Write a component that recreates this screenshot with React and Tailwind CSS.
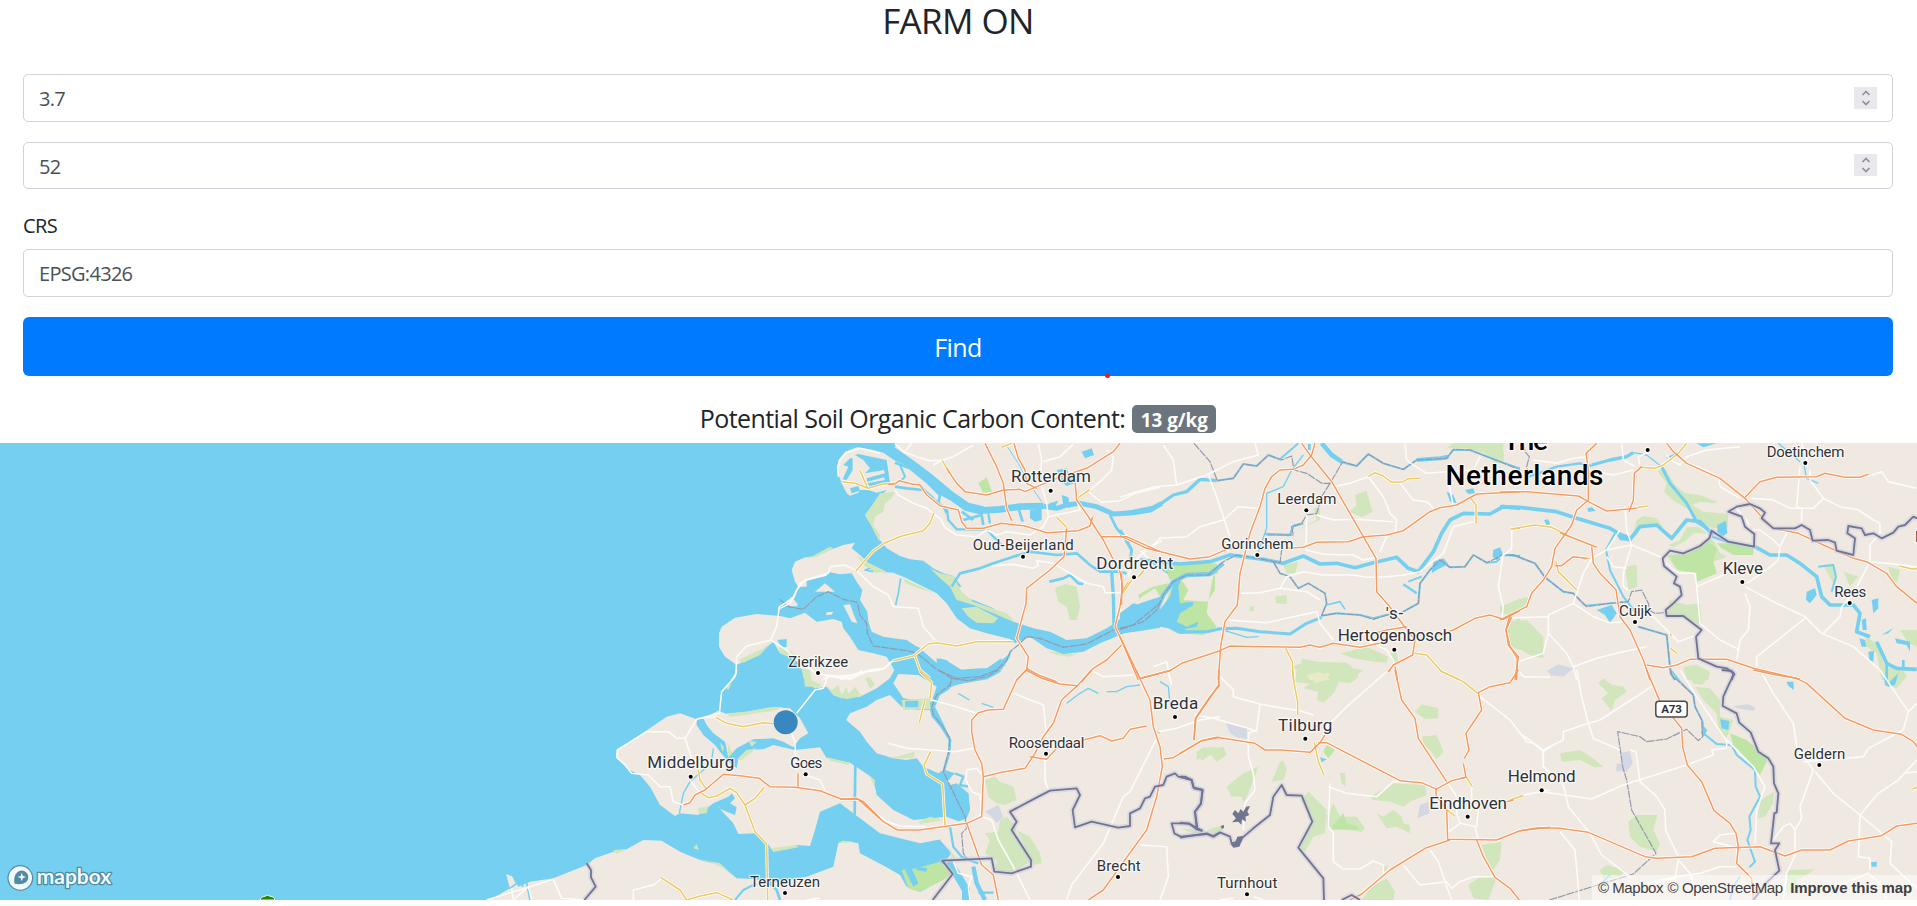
import React from "react";

// Each map tile holds shapes in its own 1/3-pixel grid, offset by (x, y) in page pixels.
const MAP_TOP = 443;
const tiles = [
  {
    x: 780, y: 440,
    land: [
      "355,0 338,32 385,55 430,88 480,125 530,165 560,185 520,185 480,165 440,125 400,85 345,62 310,38 270,28 230,22 195,35 175,60 172,95 185,130 200,160 210,167 235,158 240,150 265,150 290,158 320,150 300,170 280,195 255,225 275,255 300,300 320,325 360,348 390,358 430,362 460,385 490,400 520,408 545,440 515,440 540,470 580,480 640,505 720,560 705,600 690,650 664,690 610,715 560,725 515,740 480,765 465,800 490,850 513,900 505,950 495,990 525,1000 510,1015 530,1030 565,1060 570,1110 560,1135 510,1155 480,1200 515,1240 490,1270 400,1420 3500,1420 3500,0",
      "35,390 45,365 75,352 110,348 150,330 190,315 225,308 215,325 240,345 265,370 290,395 340,398 380,415 420,435 470,460 500,490 530,535 570,565 620,580 690,597 708,608 690,640 660,665 630,683 590,695 545,690 510,668 480,655 470,680 440,662 415,635 410,620 380,600 340,595 310,590 275,575 265,545 262,515 240,480 247,450 230,425 215,400 180,403 150,397 120,410 80,420 80,440 55,440 45,425",
      "105,455 135,430 165,455", "190,495 210,493 220,520 232,550 215,545",
      "140,517 160,515 155,524 138,525", "20,480 35,485 55,500 30,495",
    ],
    green: [
      "300,160 345,155 335,175 315,190 310,215 285,230 280,255 300,285 298,305 275,260 255,225 280,190",
      "825,445 855,432 890,440 900,500 890,540 870,540 860,500 835,485",
      "450,385 480,400 520,408 545,455 580,485 680,520 710,550 640,520 580,495 530,480 510,440 480,415",
      "545,505 590,500 655,535 640,550 590,548 565,530", "230,345 260,365 320,395 285,398 250,375",
      "370,415 400,430 460,458 430,450 375,430", "800,632 880,642 920,625 870,650 830,645",
    ],
    dark: ["595,130 620,112 636,155 610,158", "1075,465 1110,445 1140,440 1140,490 1100,480 1080,485", "1040,510 1075,490 1110,500 1100,530 1040,543"],
    water: [
      "700,545 760,565 810,575 860,600 920,595 980,565 1010,545 1045,515 1080,490 1140,470 1140,540 1080,560 1020,585 960,610 910,635 850,642 800,625 750,590 705,610 690,590",
      "190,75 210,55 218,55 218,90 200,120 188,118 205,80", "225,45 235,42 320,60 330,130 270,140 262,130 315,120 312,112 262,125 260,115 315,100 312,90 255,100 270,85 250,60",
      "210,145 235,138 240,152 215,160", "750,210 785,205 785,240 765,245 750,235", "845,165 865,172 870,205 850,195",
      "905,35 935,25 942,45 915,55", "470,655 500,660 530,690 600,685 640,685 600,720 540,718 470,690", "830,90 860,85 870,110 895,125 860,138 845,125",
      "808,190 835,182 820,210 800,208",
    ],
    rivers: [
      [26, "330,28 390,70 450,115 510,165 560,200 610,212"], [20, "600,212 660,208 720,200 790,198"], [15, "790,198 830,205 860,195 900,190 950,200 1000,222 1060,218 1110,210 1145,190"],
      [7, "500,200 505,240 530,268 620,268 640,290 670,320"], [6, "360,75 375,110 365,120"], [8, "345,68 390,85 440,125 480,165 475,190"],
      [7, "420,135 450,170 490,200 500,220"], [8, "345,140 380,145 430,150 460,175"], [8, "515,440 540,400 600,385 640,370 700,350 750,335 830,345 890,340 930,375 960,395 1010,395 1040,400"],
      [10, "995,395 1000,470 1002,560"], [8, "990,225 1010,265 1040,300 1055,330 1050,360"], [8, "550,240 605,225 610,255"], [8, "545,215 580,240"], [7, "625,220 630,250"], [8, "715,205 728,245"],
      [8, "808,425 850,415 870,405 895,430 910,432"], [3, "682,20 715,70 740,120 785,185"], [5, "362,415 355,460 347,495"], [5, "270,385 255,390 280,395"],
      [24, "230,500 265,590 300,612 410,632 470,685 540,720 620,700 670,665"],
    ],
    white: [
      "345,10 370,35 415,52 450,62 490,60 520,50 580,15", "375,35 395,10", "485,60 460,75", "175,110 173,80 180,60 200,38 240,25 300,40", "345,150 355,165 400,190 440,205 480,235 495,262 530,285 590,290 620,270 650,285 680,275 750,285 790,260 805,230 800,190 780,120 785,60 775,12",
      "790,65 840,50 880,12", "925,155 965,187 1020,182 1065,160 1140,142", "980,30 1000,50 995,90 960,125 930,150", "805,230 900,210 890,180", "635,378 700,373 760,385 775,375 770,362 820,370 870,400 920,430 970,440 975,458 1030,458",
      "0,505 30,490 50,450 75,420 145,400 150,380 195,375 230,392 280,440 325,465 340,500 415,505 430,560 465,600", "1145,302 1100,330 1060,365 1045,410", "145,710 220,705 270,690 310,685 340,660",
    ],
    yellow: ["185,125 225,130 265,145 305,133 345,130", "240,92 262,142", "462,218 450,250 430,272 365,288 315,308 280,333 228,392", "487,62 510,100", "665,22 695,10", "340,662 400,648 445,612 470,608 530,618 590,605 700,605", "405,648 420,690 450,715", "928,150 895,172", "830,232 860,262", "1088,395 1075,412", "1055,420 1030,458"],
    orange: [
      "325,133 345,132 358,122 395,132 420,135 440,165 480,197 535,210 545,245 560,265 610,265 665,250 735,258 800,278 895,272 930,258", "500,85 530,130 555,155 620,165 670,150 720,148 735,155 770,140 830,115 920,85 1000,35 1020,10",
      "615,10 650,80 670,130 680,205 695,242", "702,10 715,55 735,90 740,130 770,145", "885,125 890,180 925,230 950,270 970,300 990,340 1020,395 1028,440 1020,500 1005,560 1080,715", "965,290 1040,290 1140,335", "860,265 852,350 810,390 740,445 738,490 710,595 745,650 740,690 710,720", "740,685 775,705 830,725", "1025,615 980,660 940,685 905,725", "938,230 930,258",
    ],
    bound: ["0,478 25,500 70,508 110,470 145,455 190,478 232,487 240,525 260,550 262,580 280,618 380,632 412,640 470,688 530,715 600,710 650,690 680,662 690,635 715,615 740,590 780,595 850,622 920,612 1000,570 1060,555 1140,490"],
  },
  {
    x: 600, y: 440,
    land: ["357,580 365,560 405,533 470,522 540,528 570,535 615,518 650,545 700,537 725,545 730,565 750,590 775,630 820,640 860,650 883,690 870,715 830,745 780,770 725,775 700,765 680,740 645,745 620,730 610,700 590,660 540,640 520,605 490,630 450,655 410,675 375,650 357,620", "555,490 575,470 595,495 575,500"],
    green: ["415,660 490,625 515,605 480,645 430,668", "605,685 625,690 630,720 610,715", "535,620 575,635 590,655 540,640", "600,360 650,350 700,325 690,320 640,347", "615,740 610,700 625,690 635,740"],
    water: ["532,600 560,597 560,620 545,625"],
    rivers: [],
    white: ["395,722 408,700 410,650 440,618 512,600 530,560 538,500 580,475 600,430 620,420 680,405", "515,602 560,630 590,660 650,700 720,715 790,695 850,688 880,662", "670,720 685,705"],
    yellow: [], orange: [], bound: [],
  },
  {
    x: 1120, y: 440,
    land: [],
    green: ["705,165 740,152 750,190 758,215 725,232 690,215 710,195", "465,470 500,465 500,492 468,490", "390,500 403,497 400,515 388,512", "980,25 1000,10 1150,10 1150,55 1130,75 1095,40 1040,25", "515,680 545,670 545,655 590,665 680,668 700,685 730,690 690,720 530,720 540,695", "660,640 740,620 805,650 800,668 760,665 700,655", "810,640 830,635 835,665 820,672", "580,205 600,205 600,240 520,275 590,240", "490,375 535,365 525,400 500,400", "1145,500 1200,475 1200,520 1165,520", "1160,560 1200,530 1200,630 1170,620"],
    dark: ["130,375 290,370 295,400 260,410 200,402 150,420", "190,420 285,405 285,450 265,480 260,520 290,560 250,585 170,580 140,560 120,555 140,480 160,430", "55,465 100,440 145,430 120,490 110,480 65,490"],
    landOver: ["185,420 280,405 265,485 190,480 205,450", "50,490 65,470 105,445 120,470 110,490 70,505"],
    pale: ["560,705 600,695 630,720 570,720"],
    water: ["0,520 40,490 60,495 30,530 110,520 150,470 160,430 185,415 175,440 180,490 220,485 220,495 180,520 170,545 200,560 235,545 230,560 180,570 210,580 180,582 145,565 120,560 60,570 0,580", "980,155 1000,165 1010,190 990,185", "1035,150 1060,145 1065,160 1045,162", "1120,330 1140,322 1150,345 1130,360 1118,350", "940,365 970,355 985,372 950,390 935,400"],
    rivers: [
      [10, "0,222 50,212 110,200 160,165 200,155 240,118 290,122"], [6, "290,122 340,115 370,72 410,78 445,45 480,58 535,10"], [4, "550,45 515,90 490,140 440,160 440,265 415,335"],
      [7, "435,282 510,285 520,258 550,250"], [14, "605,10 635,45 665,65"], [6, "660,65 710,78 745,42 790,70 850,88 890,60 980,55 1000,30 1050,30 1140,65 1200,85"], [12, "890,60 960,55 985,50"],
      [11, "60,360 140,368 180,372 270,365 330,345 370,350 430,358 490,370 550,348 600,372 650,370 705,383 760,368 830,352 865,385 895,395 940,335 965,280 990,240 1030,220 1110,222 1150,200 1200,205"],
      [6, "0,578 60,570 120,560"], [13, "10,568 70,545 110,510 130,465 160,425 200,405 270,402 310,370"], [9, "150,560 200,575 260,575 300,566 350,565 420,575 510,582 560,550 605,532"], [4, "315,572 380,592 415,590"],
      [5, "460,365 480,400 510,410 535,445 565,430 615,460 620,490 605,525"], [5, "620,495 660,485 675,508"], [6, "605,527 650,520 720,525 760,535 800,525 840,520"], [6, "850,515 895,490 900,430 930,390 960,360 990,382 1035,380 1060,345 1100,368 1130,365 1150,345 1200,348"], [7, "850,433 890,460"], [6, "865,425 905,410"], [9, "0,270 35,330"], [5, "100,370 145,400"], [8, "568,12 568,30"],
    ],
    white: ["130,15 160,60 170,135 105,140 50,155 0,172", "170,135 260,105 340,65 415,45 405,10", "265,105 290,170 330,290", "410,205 355,200 310,240 240,260 200,290 120,295 105,310 65,335 85,355", "640,140 690,130 745,110 790,170 810,220 830,240 825,280 800,290 780,335", "590,225 640,240 700,238 820,245", "560,225 558,330 610,343 700,345 730,360 770,352", "855,10 860,60 880,75 920,100 980,95", "840,130 880,180 920,185 940,205", "480,445 500,410 550,395 610,405 700,405 740,412 800,410 850,405 900,395 970,340 1000,260 1060,245", "360,460 420,458 480,445 560,455 600,480", "325,540 440,548 520,530 590,515 600,550 640,600", "980,95 1000,200", "1150,340 1135,440 1150,500 1145,540", "750,605 800,630 820,660 830,720", "100,680 140,665 150,720", "990,150 980,95 1060,90 1080,50"],
    yellow: ["745,110 765,98 790,108 815,127 850,125 865,116 900,115", "1052,175 1068,195 1068,250", "1175,267 1200,265", "497,625 517,665 520,720", "883,640 920,645 965,695 1020,720", "5,458 25,425", "55,410 72,390"],
    orange: ["0,287 80,325 210,357 270,350 320,328 370,322", "545,10 570,45 635,125 730,290 768,355 770,455 805,495 850,555 870,580 885,600 878,645 820,675 805,695", "585,10 575,45 550,75 520,88 480,90 455,110 435,145 420,200 390,280 360,400 352,495 315,545 302,620 295,720", "60,715 150,692 185,670 300,632 330,618 430,620 540,622 570,615 600,622 640,610 720,622 800,605", "500,325 550,322 590,307 685,305 730,290 800,285 850,272 930,215 960,203 1010,195 1070,162 1200,155", "765,580 800,570 860,560", "930,590 1000,570 1065,535 1110,525 1150,538 1200,512", "1175,530 1158,570 1165,615 1195,650 1185,720", "825,680 832,720", "0,590 55,720", "5,400 5,495"],
    bound: ["222,10 270,65 292,122 340,115 370,72 410,78 445,45 485,60 515,48 522,90 560,100 605,130 630,130 668,65 710,78 745,42 790,70 850,88 890,60 980,55 1000,28 1050,30 1140,65 1200,90", "630,130 605,170 590,220 560,225 545,250 515,260 520,285 440,285", "0,568 70,545 110,510 130,465 160,425 200,405 265,405 310,365 350,345 430,358 480,368 485,330", "460,365 480,400 510,410 535,445 565,430 615,460 620,490 605,527 650,520 720,525 760,538 800,525 840,520 895,490 900,430 930,390 960,360 990,382 1035,380 1060,345 1100,368 1150,345 1200,348"],
  },
  {
    x: 1500, y: 440,
    land: [],
    green: ["472,92 495,85 525,135 555,160 600,165 655,187 640,190 600,185 575,195 610,215 685,222 683,262 640,265 600,250 570,210 520,182 492,155 500,130", "410,240 430,228 470,235 490,262 470,258 425,258 412,285 395,298", "505,315 540,300 560,262 595,260 620,280 580,280 560,300 520,322", "500,345 560,340 620,300 640,300 660,340 680,350 640,365 650,400 590,425 590,400 530,390", "510,480 560,495 600,490 605,555 545,530 500,525", "375,380 410,375 412,440 385,450", "20,545 80,540 130,590 130,655 90,645 55,625 30,580", "0,500 80,470 90,490 30,525 0,520", "550,680 590,675 630,695 625,720 560,720", "970,375 1000,370 1010,420 1000,430", "1030,395 1075,410 1050,440 1040,415", "1165,380 1200,390 1190,430 1175,420", "1095,590 1130,610 1155,680 1200,690 1190,720 1145,720 1130,640 1100,620", "1200,570 1251,570 1251,620 1225,610", "0,20 12,40 10,65 0,70"],
    dark: ["510,345 560,345 625,305 650,325 640,365 650,400 590,425 590,400 535,390 520,370", "650,310 690,310 760,320 760,345 700,345 665,325"],
    purple: ["145,690 175,673 220,685 190,710 155,705"],
    water: ["652,255 678,242 682,280 665,290 652,275", "262,205 275,202 287,212 265,216", "132,240 145,238 150,252 140,256", "290,510 335,495 350,520 330,548 315,525", "920,455 945,445 950,465 930,490 918,480", "1115,480 1135,475 1135,505 1120,520", "1085,540 1098,535 1100,570 1088,570", "1145,585 1180,563 1165,580", "1185,595 1230,605 1230,635 1220,615 1190,610", "1078,595 1095,600 1100,620 1085,620", "1105,635 1122,633 1120,665 1108,660", "340,270 395,290 395,305 360,300", "590,10 650,10 610,22"],
    rivers: [
      [11, "0,200 60,202 170,215 230,235 330,265 390,300"], [11, "390,298 420,260 470,255 515,295 560,240 600,245 640,285"], [10, "275,75 330,60 380,50 400,38"], [4, "400,38 440,45 485,80"], [9, "485,80 510,130 560,190 590,245 625,268"], [7, "85,110 130,95 170,80 240,70 275,78"],
      [7, "635,290 680,305 765,320"], [11, "765,320 810,345 860,345 900,370 950,410 965,470 990,495 1030,495 1060,495 1080,520 1070,575 1110,590"], [11, "1130,605 1160,670 1190,685 1250,688"], [6, "0,345 40,345 105,370 135,412 190,455 220,460 255,497"],
      [6, "345,280 318,330 330,390 370,470 410,520"], [5, "255,497 330,490 385,485"], [6, "415,560 500,585 512,700 525,720"], [4, "835,10 900,65"], [4, "912,75 920,115 955,130"], [5, "560,12 540,35 500,55"], [6, "955,380 1000,375 1008,410 995,455"], [8, "1160,670 1160,720"], [8, "1210,660 1210,690"],
    ],
    white: ["100,60 170,70 220,55 265,50", "265,90 340,105 400,90", "365,10 370,60 405,80", "450,35 415,50 420,85", "580,75 655,110 660,140 720,175", "500,45 510,60 540,75 560,50 620,30 720,20", "900,80 890,200 905,205 905,250", "755,175 820,180 870,205 940,205 970,175 1020,200 1075,210 1120,240 1140,250 1140,280 1110,315 1110,365 1060,460 1025,500 1020,530 970,580", "970,175 930,120 930,90", "1110,365 1160,370 1250,380", "700,195 740,240 750,270 780,270 820,300 840,320 835,360 800,390 740,430", "840,320 860,280", "320,330 395,315 480,350 520,390 540,400 585,400 590,440 670,405", "375,200 380,270 395,315 370,400 370,440 385,450", "320,330 275,355 250,400 220,490 145,525 145,580 130,640 55,665", "145,580 200,640 220,680 230,720", "0,535 145,530", "220,490 280,530 330,548 370,545", "590,440 600,550 660,600 720,630", "735,460 750,500 745,570 720,600 710,660", "735,440 830,490 915,530 965,580 1060,620 1140,690", "915,535 770,650 770,680", "420,490 470,540 535,605 590,585", "0,355 35,325 35,270", "320,350 340,380 380,385", "1100,110 1145,95 1165,125 1250,145", "220,680 290,655 350,640 440,620", "360,270 320,330", "905,10 925,70"],
    yellow: ["420,82 465,85 490,75 535,40 560,10", "32,267 105,255 155,262 200,285", "410,203 443,198", "168,365 175,395 230,450", "512,580 512,588", "512,625 530,640", "1198,378 1240,388 1251,385", "250,357 270,355"],
    orange: ["290,10 258,40 265,90 265,180 230,210 215,255 165,325 155,380 130,420 95,460 80,500 30,525 18,570 30,620 52,655 50,720", "0,156 80,155 235,168 265,185 320,213 410,205", "425,80 403,100 400,180 387,215", "500,10 520,35 560,70 660,115 735,175 780,225 820,265 895,280 970,315 1060,355 1100,365 1160,400 1190,440 1251,490", "735,172 780,125 830,112 950,110 975,100 1035,112 1080,112 1105,103", "180,278 290,322", "275,320 280,370 300,400 348,450 360,530 390,570 430,660 450,720", "165,377 185,377 220,350 260,355", "0,540 30,525", "440,675 490,683 530,675 570,658 680,658 760,685 900,718"],
    bound: ["0,345 40,345 105,370 135,412 190,455 220,460 260,500 330,490 385,485 395,455 425,450 445,490 450,512 465,520 495,518", "415,560 500,585 512,700 525,720", "70,10 75,35 88,50 80,80 85,95"],
    border: ["1251,235 1240,230 1215,255 1195,260 1180,278 1145,295 1120,280 1095,285 1085,265 1045,258 1042,280 1065,295 1060,345 1010,332 1005,308 985,300 938,302 930,270 905,255 885,265 820,265 785,235 795,218 780,205 750,192 710,200 685,215 725,230 735,260 763,282 762,320 685,305 635,272 628,295 600,318 550,340 510,332 488,355 492,378 530,410 522,430 540,440 545,465 520,490 497,510 500,528 550,528 605,570 588,590 595,655 650,680 680,685 700,700 695,720"],
  },
  {
    x: 480, y: 670,
    land: [
      "410,265 412,240 480,195 560,140 600,130 650,148 650,165 670,195 705,225 740,270 770,295 775,265 800,240 850,238 880,225 945,240 1020,232 1040,265 1110,278 1170,318 1185,350 1190,375 1240,420 1300,450 1400,440 1450,460 1450,520 1400,505 1320,520 1200,490 1120,430 1080,400 1020,425 1005,480 990,528 950,525 880,545 860,515 825,490 775,492 760,460 715,412 740,400 750,378 700,400 655,435 600,430 585,438 540,405 510,350 480,315 450,300",
      "670,145 715,122 740,132 800,125 880,112 930,115 960,145 985,190 960,205 940,232 910,215 880,205 820,208 770,235 745,262 735,215 700,190 680,165",
      "20,695 90,655 78,612 100,620 115,650 150,635 220,625 320,585 345,565 400,545 440,538 490,510 545,512 600,545 660,570 720,585 770,625 830,628 870,640 980,620 1060,590 1075,520 1090,512 1135,520 1140,550 1220,592 1260,615 1280,650 1320,665 1400,625 1450,700",
    ],
    green: ["740,130 800,125 870,112 910,112 880,122 800,134 750,140", "968,0 990,0 995,30 1025,45 1010,55 980,45", "1040,45 1055,60 1075,45 1085,75 1100,50 1105,72 1125,50 1140,72 1150,75 1085,85 1060,75", "742,215 755,245 765,240 745,262", "720,218 732,230 728,250", "770,270 800,240 830,235 785,270", "1040,262 1110,278 1105,285 1050,272", "1170,318 1185,330 1183,350", "655,415 685,408 680,430 655,432", "640,535 650,522 657,540", "870,535 950,525 955,532 885,545", "400,540 440,538 410,552", "640,563 720,580 770,625 740,600 690,575", "1075,518 1090,512 1120,515 1090,520", "805,212 830,215 815,230", "735,50 755,40 745,60"],
    water: ["738,390 755,370 765,385 750,400 770,412 765,435 740,425 715,415", "1122,280 1130,285 1128,435 1120,430"],
    rivers: [[4, "630,335 610,370 598,430"], [4, "700,235 695,270 670,300 630,335"], [6, "720,240 740,260"], [6, "765,690 790,660 830,640"], [8, "870,640 890,660 900,690"], [5, "95,610 110,640 90,655"], [5, "130,600 140,640 150,690"], [5, "110,630 130,650"]],
    white: ["770,0 765,20 725,65 718,130 650,148 615,205 590,205 565,185 500,185 412,240 410,262 435,285 455,310 505,315 540,350 570,350 580,395 610,405", "615,205 640,280", "710,140 660,145", "1045,15 1030,55 1005,60 950,130", "915,150 945,215 948,300", "630,330 660,370", "975,315 1020,330 1035,360", "1045,15 1110,28 1160,5 1200,0", "20,690 150,650 220,628 245,685 310,690", "460,690 460,660 520,645 545,625", "95,655 100,690 145,650 155,690", "980,690 1020,685"],
    yellow: ["708,142 740,160 790,170 850,158 890,162", "655,300 660,330 680,358", "665,370 685,383 710,378 750,355 770,368 795,405 825,485 860,522 863,690", "795,405 825,385 853,352", "543,623 600,660 620,690 660,678 710,668 760,690"],
    orange: ["610,405 630,398 645,375 675,360 730,313 780,317 838,325 870,350 945,352 1020,362 1085,388 1130,385 1150,395 1200,445", "954,310 954,350"],
    bound: [],
    border: ["320,580 333,600 333,622 347,650 313,690"],
  },
  {
    x: 840, y: 670,
    land: ["18,150 30,130 80,110 110,90 150,75 185,110 230,120 270,120 275,140 300,170 325,200 330,240 310,300 295,310 250,290 230,265 200,270 160,265 110,250 80,215 60,185", "160,40 175,12 235,15 290,50 275,95 230,90 190,85", "320,330 345,325 350,340 330,345"],
    green: ["185,90 270,85 272,118 190,120", "75,25 90,20 105,45 90,55", "0,80 45,60 55,80 20,88", "435,330 465,320 480,335 520,350 530,390 495,405 470,400 445,380", "500,440 530,470 525,490 560,540 575,570 520,610 465,600 470,570 435,550 450,510 435,490 475,485 480,450", "530,480 570,500 600,550 605,580 580,585 560,540", "235,455 270,440 310,450 280,455 240,462", "140,265 220,265 225,245 160,262", "1070,245 1110,230 1140,235 1140,270 1110,255 1085,272", "1040,475 1080,485 1070,495", "1115,490 1140,470 1140,490", "325,530 345,560 335,565"],
    dark: ["185,600 230,595 300,575 335,610 310,630 270,650 235,665 205,655"],
    purple: ["435,425 475,405 490,440 470,460 455,440"],
    water: ["195,93 235,92 235,112 195,112", "340,360 385,370 390,420 375,440 345,380", "195,600 215,595 235,640 220,650"],
    rivers: [[12, "300,0 330,22 380,32 440,22 480,0"], [8, "335,30 325,55 285,80 278,120 305,170 330,210 328,245 312,300"], [7, "330,470 340,530 365,560 400,575 415,580"], [24, "325,575 355,620 378,660 378,695"], [13, "400,590 410,640 435,690"], [7, "415,668 460,668"], [4, "680,100 720,70 745,55 775,70"], [4, "800,65 830,65 860,50 900,45"], [4, "355,70 388,90"], [4, "425,100 460,112"], [4, "960,35 985,50 990,100"], [3, "45,285 45,435"], [7, "345,310 370,320 360,345 385,350"], [6, "350,400 355,440 380,430"], [10, "230,595 260,600"], [10, "345,395 365,425 385,425"]],
    white: ["0,28 45,20 65,0", "275,90 350,110 410,130", "145,220 200,235 275,240 345,245 400,235", "60,390 140,455 180,468 260,470", "430,320 410,295 380,300 378,330 395,365 420,375 425,430", "520,70 610,105 620,200", "615,265 615,330 625,360", "425,440 455,450 475,510 520,590 570,690", "680,690 695,645 790,520 850,380 870,365 955,195", "900,525 980,530 985,620 960,690", "955,185 1010,175 1080,150 1140,140", "760,5 790,20 880,15", "380,460 430,430", "340,575 355,610 395,620 385,650 390,690", "985,10 995,45"],
    yellow: ["240,5 275,38 270,85", "255,90 238,158", "272,245 252,285 260,312 308,342 315,465", "952,185 960,190"],
    orange: ["0,387 55,388 130,455 172,480 240,480 380,460 425,440 430,320 425,280 405,240 395,185 395,150 415,128 445,120 490,118 530,30 558,0 605,25 660,42 712,47 755,0", "712,47 665,90 640,160 610,200 585,250 555,295 485,307 430,320", "570,260 620,268 650,235 730,210 780,197 815,213 850,205 870,178 920,168", "888,0 930,90 940,170 960,230 967,290 950,380 920,480 840,590 790,660 745,690", "905,25 995,0", "1062,210 1066,145 1110,80 1140,45", "972,267 1000,263 1085,212 1140,202", "380,460 425,585 460,615 475,690", "1136,0 1136,45"],
    bound: ["295,0 335,25 330,45 290,75 275,110 280,135 305,165 330,205 325,250 310,305 375,440 380,475 365,490 370,550 380,565", "335,25 385,32 440,20 475,0"],
    border: ["278,690 338,612 307,572 455,565 463,605 515,610 573,590 573,570 515,480 530,455 510,425 585,385 630,362 710,355 720,375 698,420 705,472 755,455 835,473 870,468 870,430 900,415 915,385 930,380 945,350 970,345 980,320 1005,310 1015,320 1055,330 1060,352 1088,360 1083,400 1065,425 1072,475 1085,482 1045,460 995,460 1003,490 1022,500 1100,492 1120,500 1140,488"],
  },
  {
    x: 1180, y: 670,
    land: [],
    green: ["350,0 530,0 535,22 510,40 475,35 465,65 430,98 410,90 415,65 370,55 390,42 345,35", "705,125 725,103 775,115 775,145 735,148", "725,200 770,195 790,245 770,268 750,240 735,230", "50,245 75,230 85,240 130,230 140,255 110,275 90,250 50,270", "275,335 300,275 310,272 320,300 310,330", "140,350 190,310 235,290 205,370 190,400 185,380 155,380", "365,390 385,365 400,380 440,420 435,490 400,500 375,545 360,530 395,455", "440,470 440,440 460,400 480,440 530,440 555,475 545,485 490,478 450,480", "570,380 640,340 735,345 740,375 690,395 670,410 630,395 580,390", "590,430 610,440 640,420 665,440 670,460 690,465 690,490 650,470 620,475", "480,310 495,308 497,350 485,340", "905,525 965,515 960,570 940,600 925,580", "865,645 900,620 950,622 925,690 880,685", "610,590 625,585 615,610", "545,690 575,650 620,625 645,665 640,690", "80,480 130,465 130,480 100,490", "0,475 50,480 40,490"],
    dark: ["430,245 440,225 465,240 445,265", "455,470 490,430 500,458 535,470 530,480 460,478"],
    pale: ["390,15 450,8 440,30 405,40"],
    purple: ["138,160 200,175 203,207 170,202 150,190", "712,445 720,405 745,395 748,430"],
    water: ["420,262 440,268 425,277"],
    rivers: [],
    white: ["120,20 160,60 160,80 240,102 310,115 360,122 400,135", "240,102 230,180 205,190 205,260 220,310 225,360 195,400 190,480", "45,135 100,145 205,175 230,185", "620,5 580,40 500,110 430,180", "445,350 500,370 590,380 640,335 680,335", "450,340 445,470 460,490 460,575 490,597 540,597 580,573 610,585 610,610", "900,80 990,150 1040,215 1060,220 1090,245 1110,230", "1090,245 1090,290 1110,310", "1015,0 1030,20 1110,22", "805,340 830,380 830,430 840,460 800,490", "875,340 875,390 895,420 890,470 840,460", "885,470 895,510", "670,585 720,645 800,635 815,655 840,635 880,620 940,620", "750,540 775,575 795,635 815,690", "1030,375 1110,360", "220,680 250,690", "120,690 160,685"],
    yellow: ["337,0 345,55 353,95 353,135", "403,217 415,275 432,315", "780,2 850,35 893,70", "860,322 877,350", "795,415 825,438", "990,390 1028,377", "840,325 860,322"],
    orange: ["116,0 116,45 48,145 42,210", "0,250 65,212 110,202 225,220 255,240 305,240 390,247 420,218 435,195", "415,218 440,218 660,332 725,338 770,358", "645,0 665,90 705,145 715,205 800,335", "1015,0 990,38 930,50 895,68 905,120 858,190 867,240 853,265", "850,280 858,322 815,332 768,358 768,375 800,420 803,508 950,510 1020,482 1110,472", "810,510 735,535 630,600 545,672 510,690", "890,510 910,560 945,622 990,655 1018,690", "625,5 630,0", "980,395 1000,390"],
    bound: [],
    border: ["0,320 15,320 35,330 42,355 67,360 63,402 45,425 50,475 65,482 50,478 30,462 0,458", "0,503 80,490 100,498 120,487 150,500 155,520 175,515 185,505 220,475 270,435 280,380 305,345 320,375 365,377 397,455 355,533 430,625 432,690", "485,690 515,675 540,690"],
    enclave: ["157,432 165,420 175,430 182,417 190,425 198,410 210,408 202,425 208,435 196,440 198,455 186,448 184,464 175,455 156,457 168,445", "152,522 165,518 172,500 188,498 188,508 178,530 160,533", "122,468 132,465 132,474 125,476"],
  },
  {
    x: 1520, y: 670,
    land: [],
    green: ["235,40 250,25 275,45 310,50 320,65 285,90 275,122 245,85 265,70", "490,0 540,5 570,20 545,45 520,40", "525,50 570,55 600,90 600,140 640,150 620,205 595,180 590,130 550,90", "325,455 350,435 412,435 400,480 420,520 410,545 360,530 330,500", "120,250 180,240 215,262 250,290 225,292 180,270 125,275", "722,390 762,365 760,400 735,440 712,445", "1090,5 1150,0 1160,20 1130,55 1100,45", "240,600 260,585 315,600 300,620 250,625", "800,600 885,598 850,620 830,630 840,670 800,665"],
    dark: ["630,190 680,210 745,265 720,315 690,280 640,225"],
    purple: ["640,108 685,103 707,113 700,122 650,115", "302,248 330,243 338,280 320,305 288,303 290,283 308,278", "80,0 122,0 120,10 95,18"],
    water: ["600,148 628,153 625,180 605,175", "800,35 820,35 822,60 805,48", "1090,10 1105,40 1135,10 1125,45 1105,50 1095,45", "1053,577 1070,575 1070,590 1055,590", "548,165 562,180 552,200 543,190"],
    rivers: [[6, "452,0 480,35 520,75 525,110 548,155 550,190 590,222 635,225 650,255 705,300 707,350 720,380 688,440 692,480 682,510 705,575 688,592"], [4, "660,620 640,650 630,690"], [4, "245,640 270,615"]],
    white: ["170,0 185,80 205,160 220,205 300,240", "395,50 240,150 205,160 130,185 130,210 70,240 0,190", "70,240 70,290 130,345 145,410 210,490 245,555 330,620", "330,240 348,245 360,335 410,380 435,420 437,480 475,560", "65,365 215,387 310,345 500,285 580,255 575,240 620,235 620,210", "480,0 530,80 615,205 640,230 700,290 735,350 710,420 705,520", "720,0 760,70 820,160 830,230 880,300 840,410 845,445 825,480 825,540", "850,275 1030,260 1045,235 1150,180 1165,125 1080,0", "885,305 940,370 1020,435 1115,515 1110,580 1190,655", "1190,270 1135,330 1075,370 1020,435 1015,560 1050,565 1050,600", "755,515 790,470 810,460 825,480", "120,485 165,540 178,690", "475,570 465,625 405,640", "475,570 510,610 535,690", "380,640 470,620 540,610 600,590 650,590", "645,490 600,495 580,515 640,530", "830,545 800,610 790,690", "920,660 1045,610 1080,640 1100,690", "1150,310 1191,305", "1165,125 1191,100"],
    yellow: ["1178,357 1191,352", "0,380 8,378"],
    orange: ["380,0 420,95 485,175 488,230 502,285 545,335 582,422 630,460 648,490 655,530 650,580 695,625 700,690", "0,482 55,473 120,475 205,487 375,560 410,565 515,560 585,535 720,530 795,558 845,540 930,540 985,513 1085,497 1130,468 1191,460", "700,0 770,15 830,25 860,40 975,145 1060,180 1145,193 1180,215 1191,230"],
    bound: ["88,690 340,612 408,550 335,420 320,330 308,290 293,185 360,200 380,215 440,207 500,178 535,212 548,200 545,150 525,110 520,75 480,38 455,15 452,0"],
    border: ["605,0 635,3 643,12 628,40 610,80 608,108 650,130 658,158 692,187 715,245 745,265 760,290 762,340 775,370 770,427 763,430 753,520 778,520 765,540 778,602 740,637 700,690"],
  },
];

const labels = [
  ["Rotterdam", 1011, 482, 80, 17, 1050.7, 490.7],
  ["Oud-Beijerland", 972.7, 550.3, 101, 15, 1023, 556.7],
  ["Dordrecht", 1096.3, 569, 77, 17, 1134, 577.3],
  ["Zierikzee", 788.3, 667, 60, 15, 818, 673],
  ["Leerdam", 1277.3, 504, 59, 15, 1306.3, 510.3],
  ["Gorinchem", 1221.3, 548.5, 72, 15, 1257.3, 555],
  ["'s-", 1385.7, 619, 17.6, 17, null, null],
  ["Hertogenbosch", 1337.7, 641.3, 114.3, 17, 1394.3, 649.7],
  ["Doetinchem", 1766.7, 456.7, 77.7, 15, 1805.3, 463],
  ["Kleve", 1722.7, 574, 40.3, 17, 1742.3, 582],
  ["Rees", 1834.3, 597, 32, 15, 1849.7, 603],
  ["Cuijk", 1619, 615.7, 32.7, 15, 1635, 622],
  ["Middelburg", 647.3, 768, 87, 17, 690.7, 776.7],
  ["Goes", 790.3, 767.7, 32, 15, 805.7, 774.3],
  ["Terneuzen", 750, 887, 70, 15, 785, 893],
  ["Roosendaal", 1008.7, 747.7, 75.6, 15, 1046, 753.7],
  ["Breda", 1152.7, 709, 45.6, 17, 1175, 717],
  ["Brecht", 1096.7, 871, 44, 15, 1118, 877],
  ["Tilburg", 1278, 730.7, 54.3, 17, 1305.3, 738.7],
  ["Eindhoven", 1429.3, 809, 77.7, 17, 1467.7, 816.7],
  ["Turnhout", 1217, 888.3, 60.3, 15, 1247, 894.3],
  ["Helmond", 1507.7, 782.3, 68, 17, 1541.7, 790.3],
  ["Geldern", 1793.7, 759, 51.6, 15, 1819.3, 765],
];

function Layer({ render }) {
  return tiles.map((t, i) => (
    <g key={i} transform={`translate(${t.x} ${t.y}) scale(0.333333)`}>{render(t)}</g>
  ));
}

const areas = (list, fill) => (list || []).map((p, i) => <polygon key={i} points={p} fill={fill} />);
const lines = (list, stroke, width, extra) =>
  (list || []).map((p, i) => (
    <polyline key={i} points={p} fill="none" stroke={stroke} strokeWidth={width} strokeLinejoin="round" strokeLinecap="butt" {...extra} />
  ));

function MapCanvas() {
  return (
    <svg className="block h-full w-full" viewBox={`0 ${MAP_TOP} 1917 457`} fontFamily="Roboto, sans-serif">
      <rect x="0" y={MAP_TOP} width="1917" height="457" fill="#75cff0" />
      <Layer render={(t) => areas(t.land, "#efe9e1")} />
      <Layer render={(t) => areas(t.green, "#d1e6bd")} />
      <Layer render={(t) => areas(t.dark, "#bfe5a4")} />
      <Layer render={(t) => areas(t.landOver, "#efe9e1")} />
      <Layer render={(t) => areas(t.pale, "#e8eac8")} />
      <Layer render={(t) => areas(t.purple, "#d4d8e2")} />
      <Layer render={(t) => areas(t.water, "#75cff0")} />
      <Layer
        render={(t) =>
          t.rivers.map(([w, p], i) => (
            <polyline key={i} points={p} fill="none" stroke="#75cff0" strokeWidth={w} strokeLinejoin="round" />
          ))
        }
      />
      <Layer render={(t) => lines(t.bound, "#9299ad", 3.5, { strokeDasharray: "24 3" })} />
      <Layer render={(t) => lines(t.white, "#fdfcfb", 4.6)} />
      <Layer render={(t) => lines([...t.yellow, ...t.orange], "#ffffff", 9)} />
      <Layer render={(t) => lines(t.yellow, "#edca62", 4.6)} />
      <Layer render={(t) => lines(t.orange, "#f69c63", 4.6)} />
      <Layer render={(t) => lines(t.border, "#c9cae0", 16, { opacity: 0.5 })} />
      <Layer render={(t) => lines(t.border, "#71758f", 5.5)} />
      <Layer render={(t) => areas(t.enclave, "#71758f")} />

      <g fill="#2e3238" stroke="#ffffff" strokeOpacity="0.75" strokeWidth="2.4" strokeLinejoin="round" paintOrder="stroke">
        {labels.map(([name, x, y, w, size, dx, dy]) => (
          <g key={name}>
            {dx && <circle cx={dx} cy={dy} r="2" fill="#000" />}
            <text x={x} y={y} fontSize={size} textLength={w}>{name}</text>
          </g>
        ))}
        <circle cx="1647.7" cy="450" r="2" fill="#000" />
        <g fill="#000" fontSize="28" fontWeight="500">
          <text x="1503" y="450" textLength="45">The</text>
          <text x="1445.5" y="485.3" textLength="158">Netherlands</text>
        </g>
        <text x="1915" y="542" fontSize="15">B</text>
      </g>

      <rect x="1655.8" y="701.3" width="31.4" height="15.8" rx="3" fill="#fff" stroke="#4b4b4b" strokeWidth="1.5" />
      <text x="1661.3" y="713.3" fontSize="11.5" fontWeight="700" fill="#303030" textLength="20.5">A73</text>

      <circle cx="785.7" cy="722.3" r="12" fill="#3887be" />
      <path d="M260.500 900v-1.500l2-1.500 2.500-.8 2.500-1 2.500 1 3 .8 1.500 1.500V900z" fill="#228800" stroke="#e9f7ee" strokeWidth="1" />

      <g>
        <circle cx="20.300" cy="878" r="12.300" fill="#f3faff" stroke="#4f8ba3" strokeWidth="1.200" />
        <path d="M14.500 883.800c-.9-5 .1-9 2.600-11.300a6.600 6.600 0 0 1 9.300 0 6.600 6.600 0 0 1 0 9.300c-2.300 2.400-6.900 3-11.900 2z" fill="#4f8ba3" />
        <path d="M21.800 872.700l1.100 3.200 3.200 1.100-3.200 1.100-1.100 3.200-1.100-3.200-3.200-1.100 3.200-1.100z" fill="#fff" />
        <text x="36.700" y="883.500" fontFamily="Lato, sans-serif" fontWeight="700" fontSize="20.500" textLength="74.500" lengthAdjust="spacingAndGlyphs" fill="#f3faff" stroke="#4f8ba3" strokeWidth="2.600" strokeLinejoin="round" paintOrder="stroke">mapbox</text>
      </g>
    </svg>
  );
}

function Spinner() {
  return (
    <span className="mb-px flex h-[22px] w-[23px] items-center justify-center bg-[#e9e9ed]">
      <svg width="10" height="16" viewBox="0 0 10 16" fill="none" stroke="#8f8f9d" strokeWidth="1.700">
        <path d="M1.500 5l3.500-3.500 3.500 3.500M1.500 11l3.500 3.500 3.500-3.500" />
      </svg>
    </span>
  );
}

function Field({ value, spinner, className }) {
  return (
    <div className={`flex items-center justify-between rounded-[5px] border border-[#ced4da] px-[15px] text-[20px] text-[#495057] ${className}`}>
      <span className="pt-[2px] tracking-[-0.7px]">{value}</span>
      {spinner && <Spinner />}
    </div>
  );
}

export default function App() {
  return (
    <div className="h-[906px] w-full overflow-hidden bg-white text-[#212529]" style={{ fontFamily: '"Open Sans", "Noto Sans", sans-serif' }}>
      <div className="flex h-[443px] flex-col pr-6 pl-[23px]">
        <h3 className="h-[74px] text-center text-[35px] leading-[41px] tracking-[-0.6px]">FARM ON</h3>
        <Field value="3.7" spinner className="mb-5 h-12" />
        <Field value="52" spinner className="h-[47px]" />
        <label className="mt-[21px] mb-[9px] h-[30px] text-[20px] leading-[32px] tracking-[-0.6px]">CRS</label>
        <Field value="EPSG:4326" className="mb-5 h-12" />
        <button className="relative h-[59px] shrink-0 rounded-[6px] bg-[#007bff] text-[25px] leading-[61px] tracking-[-0.6px] text-white">
          Find
          <span className="absolute top-[56px] left-[1082px] h-[5px] w-[5px] rounded-full bg-[#e81b23]" />
        </button>
        <div className="mt-[29px] flex items-start justify-center gap-[7px]">
          <span className="text-[25px] leading-[26px] tracking-[-0.57px]">Potential Soil Organic Carbon Content:</span>
          <span className="flex h-7 w-[84px] items-center justify-center rounded-[5px] bg-[#6c757d] pt-[3px] text-[18.75px] leading-none font-bold tracking-[0.050px] text-white">13 g/kg</span>
        </div>
      </div>
      <div className="relative h-[457px] w-full overflow-hidden">
        <MapCanvas />
        <div className="absolute right-0 bottom-0 flex h-[25px] w-[325px] items-center justify-between bg-white/50 pt-px pr-[5px] pl-[6px] text-[15px] whitespace-nowrap text-[#404040]" style={{ fontFamily: '"Liberation Sans", Arial, sans-serif' }}>
          <span className="tracking-[-0.45px]">© Mapbox</span>
          <span className="tracking-[-0.4px]">© OpenStreetMap</span>
          <b className="ml-[3px] tracking-[-0.15px]">Improve this map</b>
        </div>
      </div>
    </div>
  );
}
